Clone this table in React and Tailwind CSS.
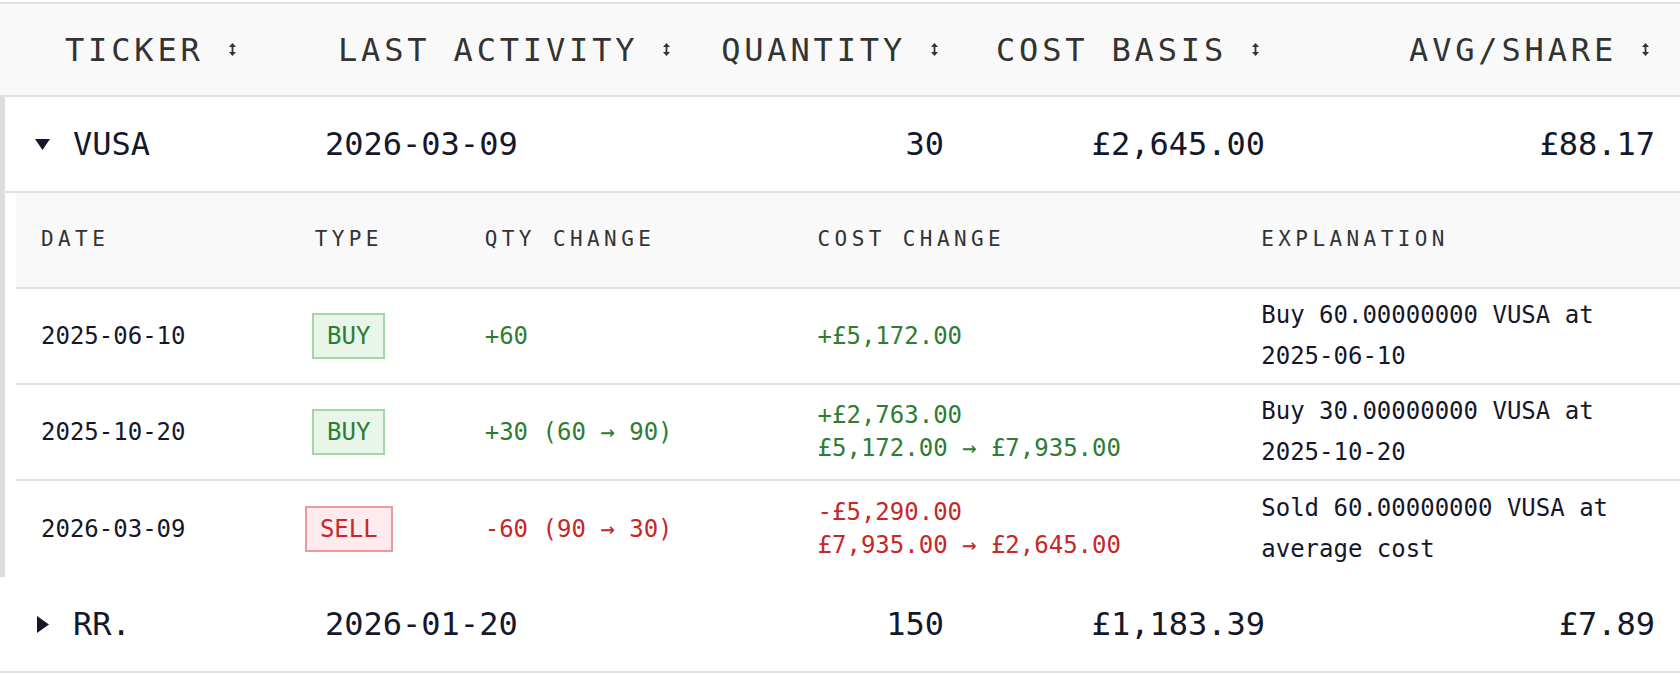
import React from "react";

const holdings = [
  {
    ticker: "VUSA",
    last: "2026-03-09",
    qty: "30",
    cost: "£2,645.00",
    avg: "£88.17",
    open: true,
    history: [
      {
        date: "2025-06-10",
        type: "BUY",
        qty: "+60",
        cost: ["+£5,172.00"],
        note: "Buy 60.00000000 VUSA at 2025-06-10",
      },
      {
        date: "2025-10-20",
        type: "BUY",
        qty: "+30 (60 → 90)",
        cost: ["+£2,763.00", "£5,172.00 → £7,935.00"],
        note: "Buy 30.00000000 VUSA at 2025-10-20",
      },
      {
        date: "2026-03-09",
        type: "SELL",
        qty: "-60 (90 → 30)",
        cost: ["-£5,290.00", "£7,935.00 → £2,645.00"],
        note: "Sold 60.00000000 VUSA at average cost",
      },
    ],
  },
  { ticker: "RR.", last: "2026-01-20", qty: "150", cost: "£1,183.39", avg: "£7.89", open: false },
];

/* ── sort arrows ── */
const SortIcon = () => (
  <svg width="9" height="15" viewBox="0 0 9 15" className="ml-[24px] shrink-0">
    <path d="M4.5 3 L4.5 12" stroke="#333" strokeWidth="1.8" />
    <path d="M1 5 L4.5 1 L8 5 Z" fill="#333" />
    <path d="M1 10 L4.5 14 L8 10 Z" fill="#333" />
  </svg>
);

const Caret = ({ open }) =>
  open ? (
    <svg width="15" height="11" viewBox="0 0 15 11" className="shrink-0">
      <path d="M0 0 L15 0 L7.5 11 Z" fill="#15172a" />
    </svg>
  ) : (
    <svg width="12" height="17" viewBox="0 0 12 17" className="shrink-0">
      <path d="M0 0 L12 8.5 L0 17 Z" fill="#15172a" />
    </svg>
  );

const HeadCell = ({ label, right, pad }) => (
  <div className={`flex items-center ${right ? "justify-end pr-[30px]" : pad}`}>
    <span>{label}</span>
    <SortIcon />
  </div>
);

const Badge = ({ type }) =>
  type === "BUY" ? (
    <span className="border-2 border-[#a5d6a7] bg-[#e8f5e9] text-[#2e7d32] px-[13px] py-[1px] leading-[40px]">
      BUY
    </span>
  ) : (
    <span className="border-2 border-[#ef9a9a] bg-[#ffebee] text-[#c62828] px-[13px] py-[1px] leading-[40px]">
      SELL
    </span>
  );

const MainRow = ({ h }) => (
  <div className="grid grid-cols-[300px_410px_259px_321px_1fr] h-[96px] items-center border-b-2 border-[#e0e0e0] text-[32px] text-[#15172a]">
    <div className="flex items-center pl-[35px]">
      <div className="w-[15px] flex justify-center">
        <Caret open={h.open} />
      </div>
      <span className="ml-[23px] font-medium">{h.ticker}</span>
    </div>
    <div className="pl-[25px]">{h.last}</div>
    <div className="text-right pr-[25px]">{h.qty}</div>
    <div className="text-right pr-[25px]">{h.cost}</div>
    <div className="text-right pr-[25px]">{h.avg}</div>
  </div>
);

const History = ({ rows }) => (
  <div className="pl-[16px]">
    <div className="grid grid-cols-[2fr_2fr_3fr_4fr_4fr] h-[96px] items-center bg-[#f9f9f9] border-b-2 border-[#e0e0e0] text-[21px] tracking-[0.21em] text-[#333]">
      <div className="pl-[25px]">DATE</div>
      <div className="text-center">TYPE</div>
      <div className="pl-[25px]">QTY CHANGE</div>
      <div className="pl-[25px]">COST CHANGE</div>
      <div className="pl-[25px]">EXPLANATION</div>
    </div>
    {rows.map((r, i) => {
      const tone = r.type === "BUY" ? "text-[#2e7d32]" : "text-[#c62828]";
      const last = i === rows.length - 1;
      return (
        <div
          key={i}
          className={`grid grid-cols-[2fr_2fr_3fr_4fr_4fr] h-[96px] items-center text-[24px] text-[#15172a] ${
            last ? "" : "border-b-2 border-[#e0e0e0]"
          }`}
        >
          <div className="pl-[25px]">{r.date}</div>
          <div className="flex justify-center">
            <Badge type={r.type} />
          </div>
          <div className={`pl-[25px] ${tone}`}>{r.qty}</div>
          <div className={`pl-[25px] leading-[33px] ${tone}`}>
            {r.cost.map((c) => (
              <div key={c}>{c}</div>
            ))}
          </div>
          <div className="pl-[25px] pr-[25px] leading-[41px]">{r.note}</div>
        </div>
      );
    })}
  </div>
);

export default function App() {
  return (
    <div className="w-[1680px] h-[674px] bg-white overflow-hidden font-['DejaVu_Sans_Mono','Liberation_Mono',monospace]">
      <div className="mt-[2px] border-t-2 border-[#e0e0e0]">
        {/* ── header ── */}
        <div className="grid grid-cols-[300px_410px_259px_321px_1fr] h-[93px] items-center bg-[#f9f9f9] border-b-2 border-[#e0e0e0] text-[32px] tracking-[0.12em] text-[#333]">
          <HeadCell label="TICKER" pad="pl-[65px]" />
          <HeadCell label="LAST ACTIVITY" pad="pl-[38px]" />
          <HeadCell label="QUANTITY" right />
          <HeadCell label="COST BASIS" right />
          <HeadCell label="AVG/SHARE" right />
        </div>

        {holdings.map((h) =>
          h.open ? (
            <div key={h.ticker} className="shadow-[inset_5px_0_0_#dcdcdc]">
              <MainRow h={h} />
              <History rows={h.history} />
            </div>
          ) : (
            <MainRow key={h.ticker} h={h} />
          )
        )}
      </div>
    </div>
  );
}
